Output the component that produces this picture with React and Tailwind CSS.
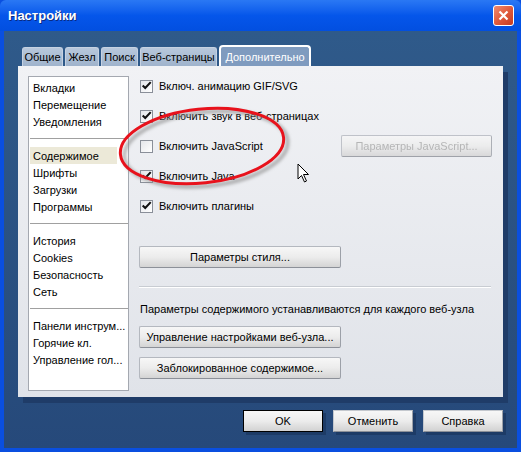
import React from "react";

const listGroups = [
  ["Вкладки", "Перемещение", "Уведомления"],
  ["Содержимое", "Шрифты", "Загрузки", "Программы"],
  ["История", "Cookies", "Безопасность", "Сеть"],
  ["Панели инструм...", "Горячие кл.", "Управление гол..."],
];

const tabs = [
  { label: "Общие", w: "w-[41px]" },
  { label: "Жезл", w: "w-[34px]" },
  { label: "Поиск", w: "w-[37px]" },
  { label: "Веб-страницы", w: "w-[77px]" },
];

function Checkbox({ checked }) {
  return (
    <div className="w-[13px] h-[13px] border border-[#8a8f99] bg-gradient-to-br from-[#e4e6ea] to-white flex items-center justify-center">
      {checked && (
        <svg width="13" height="13" viewBox="0 0 13 13" className="-mt-[1px]">
          <path d="M2 6.5 L5 9.5 L11.5 2.5" fill="none" stroke="#111" strokeWidth="2.4" />
        </svg>
      )}
    </div>
  );
}

function CheckRow({ checked, label, children }) {
  return (
    <div className="h-[30px] flex items-center">
      <div className="ml-[1px]">
        <Checkbox checked={checked} />
      </div>
      <span className="ml-[6px] w-[181px]">{label}</span>
      {children}
    </div>
  );
}

function Btn({ children, className = "", disabled }) {
  return (
    <div
      className={
        "h-[22px] flex items-center justify-center rounded-[2px] border border-[#b4b8bf] border-b-[#8c9098] border-r-[#9ca0a8] bg-gradient-to-b from-[#f7f7f7] via-[#ececec] to-[#d4d4d4] " +
        (disabled ? "text-[#a8a8a8] opacity-80 " : "text-black ") +
        className
      }
    >
      {children}
    </div>
  );
}

function BottomBtn({ children, isDefault }) {
  return (
    <div className="shadow-[3px_3px_0_#1d3b66]">
      <div
        className={
          "w-[80px] h-[22px] flex items-center justify-center bg-gradient-to-b from-[#f7f7f7] via-[#ececec] to-[#d2d2d2] " +
          (isDefault
            ? "border border-black"
            : "border border-[#c4c8ce] border-b-[#8c9098] border-r-[#9ca0a8]")
        }
      >
        {children}
      </div>
    </div>
  );
}

export default function App() {
  return (
    <div className="w-[521px] h-[452px] flex flex-col bg-[#0a4fe0] text-[11px] leading-[14px] text-black font-['Liberation_Sans','Arial',sans-serif] overflow-hidden">
      {/* Title bar */}
      <div className="h-[31px] flex items-center pl-[8px] pr-[7px] bg-gradient-to-b from-[#2a78f4] via-[#0556ea] to-[#024fe0] rounded-t-[6px]">
        <span className="text-white font-bold text-[13px] [text-shadow:1px_1px_0_#0a2a80]">Настройки</span>
        <div className="ml-auto w-[21px] h-[21px] rounded-[3px] border border-white bg-gradient-to-br from-[#f08a6e] via-[#e05a3c] to-[#c63a1e] flex items-center justify-center">
          <svg width="13" height="13" viewBox="0 0 13 13">
            <path d="M2.5 2.5 L10.5 10.5 M10.5 2.5 L2.5 10.5" stroke="white" strokeWidth="2.2" />
          </svg>
        </div>
      </div>

      {/* Body */}
      <div className="relative flex-1 mx-[4px] mb-[4px] bg-gradient-to-b from-[#2f5a8a] to-[#26497a] pt-[14px]">
        {/* Tabs */}
        <div className="flex items-end gap-[2px] pl-[18px] h-[21px]">
          {tabs.map((t) => (
            <div
              key={t.label}
              className={t.w + " h-[19px] rounded-t-[3px] border border-b-0 border-[#c6d2e2] bg-gradient-to-b from-[#b8c8dc] to-[#9fb3cc] flex items-center justify-center"}
            >
              {t.label}
            </div>
          ))}
          <div className="w-[92px] h-[21px] rounded-t-[4px] border-2 border-b-0 border-white bg-[#7f9bbf] text-white flex items-center justify-center">
            Дополнительно
          </div>
        </div>

        {/* Panel */}
        <div className="ml-[14px] w-[485px] h-[331px] bg-gradient-to-b from-[#f1f2f5] to-[#e0e3e9] shadow-[5px_6px_0_#1f3c68] flex pt-[10px] pl-[10px]">
          {/* List */}
          <div className="w-[101px] h-[315px] bg-white border border-[#a4a8b0] pt-[2px]">
            {listGroups.map((g, gi) => (
              <div key={gi}>
                {gi > 0 && <div className="h-[1px] bg-[#a0a0a0] ml-[1px] mt-[8px] mb-[8px]" />}
                {g.map((item) => (
                  <div
                    key={item}
                    className={
                      "h-[17px] flex items-center pl-[3px] ml-[1px] w-[87px] whitespace-nowrap " +
                      (item === "Содержимое" ? "bg-[#ece9d8]" : "")
                    }
                  >
                    {item}
                  </div>
                ))}
              </div>
            ))}
          </div>

          {/* Right column */}
          <div className="ml-[10px] w-[353px] -mt-[5px]">
            <CheckRow checked label="Включ. анимацию GIF/SVG" />
            <CheckRow checked label="Включить звук в веб-страницах" />
            <CheckRow label="Включить JavaScript">
              <Btn disabled className="ml-[1px] w-[151px]">Параметры JavaScript...</Btn>
            </CheckRow>
            <CheckRow checked label="Включить Java" />
            <CheckRow checked label="Включить плагины" />

            <Btn className="mt-[25px] w-[202px]">Параметры стиля...</Btn>

            <div className="mt-[18px] w-[352px] h-[1px] bg-[#c8ccd2] border-b border-white box-content" />

            <div className="mt-[14px] pl-[1px]">Параметры содержимого устанавливаются для каждого веб-узла</div>

            <Btn className="mt-[10px] w-[202px]">Управление настройками веб-узла...</Btn>
            <Btn className="mt-[9px] w-[202px]">Заблокированное содержимое...</Btn>
          </div>
        </div>

        {/* Bottom buttons */}
        <div className="flex justify-end gap-[10px] pr-[14px] mt-[13px]">
          <BottomBtn isDefault>OK</BottomBtn>
          <BottomBtn>Отменить</BottomBtn>
          <BottomBtn>Справка</BottomBtn>
        </div>

        {/* Annotation overlay: red ellipse + cursor */}
        <svg className="absolute left-[96px] top-[60px]" width="200" height="110" viewBox="0 0 200 110">
          <defs>
            <filter id="blur" x="-20%" y="-20%" width="140%" height="140%">
              <feGaussianBlur stdDeviation="1.5" />
            </filter>
          </defs>
          <ellipse cx="106" cy="58" rx="82" ry="37" transform="rotate(-6 106 58)" fill="none" stroke="#8a8a8a" strokeOpacity="0.6" strokeWidth="4" filter="url(#blur)" />
          <ellipse cx="102" cy="55" rx="82" ry="37" transform="rotate(-6 102 55)" fill="none" stroke="#e8121c" strokeWidth="3" />
        </svg>
        <svg className="absolute left-[293px] top-[132px]" width="14" height="22" viewBox="0 0 14 22">
          <path d="M1 1 L1 16 L4.5 12.5 L7.5 19 L9.5 18 L6.5 11.5 L11.5 11.5 Z" fill="white" stroke="black" strokeWidth="1" strokeLinejoin="miter" />
        </svg>
      </div>
    </div>
  );
}
